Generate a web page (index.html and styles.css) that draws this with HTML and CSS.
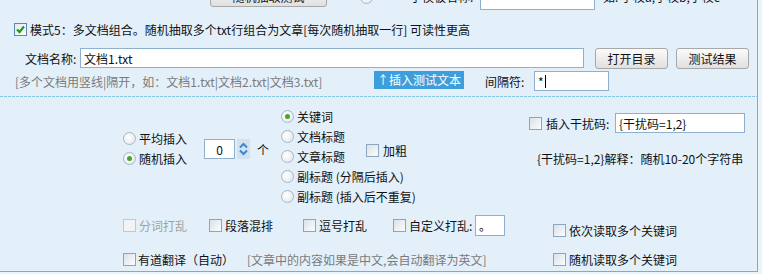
FILE: index.html
```html
<!DOCTYPE html>
<html lang="zh-CN">
<head>
<meta charset="utf-8">
<link rel="stylesheet" href="styles.css">
</head>
<body>
<div class="panel">
  <div class="row top">
    <button class="btn btn-top">随机抽取测试</button>
    <span class="rd top-radio"></span>
    <span class="top-label">子模板名称:</span>
    <span class="input top-input"></span>
    <span class="top-hint">如: 学校a,学校b,学校c</span>
  </div>

  <div class="row r1">
    <span class="cb checked"><svg width="11" height="11" viewBox="0 0 11 11"><path d="M2 5.5 L4.5 8 L9 2.5" stroke="#1f9a1f" stroke-width="2.2" fill="none"/></svg></span>
    <span class="r1-text">模式5：多文档组合。随机抽取多个txt行组合为文章[每次随机抽取一行] 可读性更高</span>
  </div>

  <div class="row r2">
    <span class="r2-label">文档名称:</span>
    <span class="input r2-input">文档1.txt</span>
    <button class="btn btn-open">打开目录</button>
    <button class="btn btn-test">测试结果</button>
  </div>

  <div class="row r3">
    <span class="hint r3-hint">[多个文档用竖线|隔开，如：文档1.txt|文档2.txt|文档3.txt]</span>
    <span class="tag">↑插入测试文本</span>
    <span class="r3-label">间隔符:</span>
    <span class="input r3-input">*<span class="caret"></span></span>
  </div>

  <div class="dash"></div>

  <div class="mid">
    <div class="col1">
      <div class="opt"><span class="rd"></span><span class="lbl">平均插入</span></div>
      <div class="opt"><span class="rd on"></span><span class="lbl">随机插入</span></div>
    </div>
    <div class="spin">
      <span class="input spin-input">0</span>
      <span class="spin-arrows"><svg width="13" height="20" viewBox="0 0 13 20"><path d="M3 8.5 L6.5 5 L10 8.5" stroke="#3f87cf" stroke-width="2" fill="none"/><path d="M3 11.5 L6.5 15 L10 11.5" stroke="#3f87cf" stroke-width="2" fill="none"/></svg></span>
      <span class="ge">个</span>
    </div>
    <div class="col2">
      <div class="opt"><span class="rd on"></span><span class="lbl">关键词</span></div>
      <div class="opt"><span class="rd"></span><span class="lbl">文档标题</span></div>
      <div class="opt"><span class="rd"></span><span class="lbl">文章标题</span></div>
      <div class="opt"><span class="rd"></span><span class="lbl">副标题 (分隔后插入)</span></div>
      <div class="opt"><span class="rd"></span><span class="lbl">副标题 (插入后不重复)</span></div>
    </div>
    <div class="bold opt"><span class="cb"></span><span class="lbl lbl-bold">加粗</span></div>
    <div class="right">
      <div class="opt right-1"><span class="cb"></span><span class="lbl right-label">插入干扰码:</span><span class="input right-input">{干扰码=1,2}</span></div>
      <div class="right-2">{干扰码=1,2}解释：随机10-20个字符串</div>
    </div>
  </div>

  <div class="row ra">
    <div class="opt a1"><span class="cb disabled"></span><span class="lbl dis">分词打乱</span></div>
    <div class="opt a2"><span class="cb"></span><span class="lbl">段落混排</span></div>
    <div class="opt a3"><span class="cb"></span><span class="lbl">逗号打乱</span></div>
    <div class="opt a4"><span class="cb"></span><span class="lbl a4-label">自定义打乱:</span><span class="input a4-input">。</span></div>
    <div class="opt a5"><span class="cb"></span><span class="lbl">依次读取多个关键词</span></div>
  </div>

  <div class="row rb">
    <div class="opt b1"><span class="cb"></span><span class="lbl b1-label">有道翻译（自动）</span></div>
    <span class="hint b2">[文章中的内容如果是中文,会自动翻译为英文]</span>
    <div class="opt"><span class="cb"></span><span class="lbl">随机读取多个关键词</span></div>
  </div>
</div>
</body>
</html>
```

FILE: styles.css
```css
* { box-sizing: border-box; }
html, body { margin: 0; padding: 0; }
body {
  width: 762px;
  height: 274px;
  overflow: hidden;
  background: #eaf5fb;
  font-family: "Noto Sans CJK SC", "Noto Sans", sans-serif;
  font-size: 12px;
  color: #111;
}
.panel {
  display: flex;
  flex-direction: column;
  width: 758px;
  background: #e3f0fa;
  border-right: 1px solid #69b3d6;
  border-bottom: 1px solid #69b3d6;
  padding-bottom: 2px;
}
.row {
  display: flex;
  align-items: center;
  white-space: nowrap;
  height: 20px;
  flex: none;
}
.opt {
  display: flex;
  align-items: center;
  height: 20px;
  white-space: nowrap;
}
.lbl { margin-left: 3px; }
.dis { color: #a2a2a2; }
.hint { color: #7a7a7a; }

.cb {
  flex: none;
  width: 13px;
  height: 13px;
  border: 1px solid #8aa6c0;
  background: linear-gradient(135deg, #d9e1e8, #fdfdfd);
  display: flex;
  align-items: center;
  justify-content: center;
}
.cb.checked { border-color: #5f87ab; background: linear-gradient(135deg, #e2e8ee, #ffffff); }
.cb.disabled { border-color: #c4c8cc; background: #f2f3f4; }

.rd {
  flex: none;
  width: 13px;
  height: 13px;
  border-radius: 50%;
  border: 1px solid #a4b6c7;
  background: radial-gradient(circle at 40% 40%, #ffffff, #dde5ec);
  display: flex;
  align-items: center;
  justify-content: center;
}
.rd.on::after {
  content: "";
  width: 5px;
  height: 5px;
  border-radius: 50%;
  background: #4aa22d;
}

.btn {
  font: inherit;
  color: #111;
  padding: 0;
  border: 1px solid #a8a8a8;
  border-radius: 3px;
  background: linear-gradient(#fbfbfb, #e0e0e0);
  flex: none;
}
.input {
  flex: none;
  display: flex;
  align-items: center;
  height: 20px;
  padding-left: 3px;
  background: #fff;
  border: 1px solid #8fb1cf;
  color: #111;
}

/* top (cut-off) row */
.top { margin-top: -10px; align-items: flex-start; }
.btn-top { margin-left: 210px; width: 117px; height: 22px; margin-top: -5px; }
.top-radio { margin-left: 33px; margin-top: 1px; }
.top-label { margin-left: 37px; width: 66px; line-height: 20px; margin-top: -3px; }
.top-input { margin-left: 4px; width: 115px; }
.top-hint { margin-left: 8px; line-height: 20px; margin-top: -3px; }

/* row 1 */
.r1 { margin-top: 9px; }
.r1 .cb { margin-left: 14px; }
.r1-text { margin-left: 3px; }

/* row 2 */
.r2 { margin-top: 9px; }
.r2-label { margin-left: 25px; width: 55px; }
.r2-input { width: 504px; }
.btn-open { margin-left: 11px; width: 73px; height: 21px; }
.btn-test { margin-left: 8px; width: 73px; height: 21px; }

/* row 3 */
.r3 { margin-top: 3px; }
.r3-hint { margin-left: 15px; width: 359px; }
.tag {
  align-self: flex-start;
  width: 90px;
  height: 18px;
  line-height: 18px;
  padding-left: 3px;
  background: #3d9edb;
  color: #fff;
}
.r3-label { margin-left: 21px; width: 49px; }
.r3-input { width: 75px; }
.caret { display: inline-block; width: 1px; height: 13px; background: #000; margin-left: 1px; }

/* dashed separator */
.dash {
  flex: none;
  margin-top: 5px;
  height: 1px;
  background: repeating-linear-gradient(90deg, #86c8de 0 3px, transparent 3px 4px);
}

/* middle block */
.mid {
  flex: none;
  display: flex;
  align-items: flex-start;
  margin-top: 9px;
  height: 100px;
  white-space: nowrap;
}
.col1 { margin-left: 123px; margin-top: 22px; width: 81px; }
.spin { display: flex; align-items: center; margin-top: 33px; width: 77px; height: 20px; }
.spin-input { width: 31px; justify-content: center; padding-left: 0; }
.spin-arrows {
  display: flex;
  margin-left: 2px;
  width: 13px;
  height: 20px;
  background: #d3e2f0;
}
.ge { margin-left: 7px; }
.col2 { width: 85px; }
.bold { margin-top: 34px; width: 163px; }
.lbl-bold { margin-left: 4px; }
.right { width: 228px; }
.right-1 { margin-top: 7px; }
.right-label { margin-left: 4px; width: 69px; }
.right-input { width: 130px; }
.right-2 { margin-top: 16px; margin-left: 8px; height: 20px; line-height: 20px; }

/* row A */
.ra { margin-top: 9px; align-items: flex-start; }
.a1 { margin-left: 123px; width: 86px; }
.a2 { width: 94px; }
.a3 { width: 90px; }
.a4-label { width: 66px; }
.a4-input { width: 30px; height: 21px; }
.a5 { margin-left: 48px; margin-top: 5px; }

/* row B */
.rb { margin-top: 14px; }
.b1 { margin-left: 123px; }
.b1-label { margin-left: 2px; width: 109px; }
.b2 { width: 306px; }
```
